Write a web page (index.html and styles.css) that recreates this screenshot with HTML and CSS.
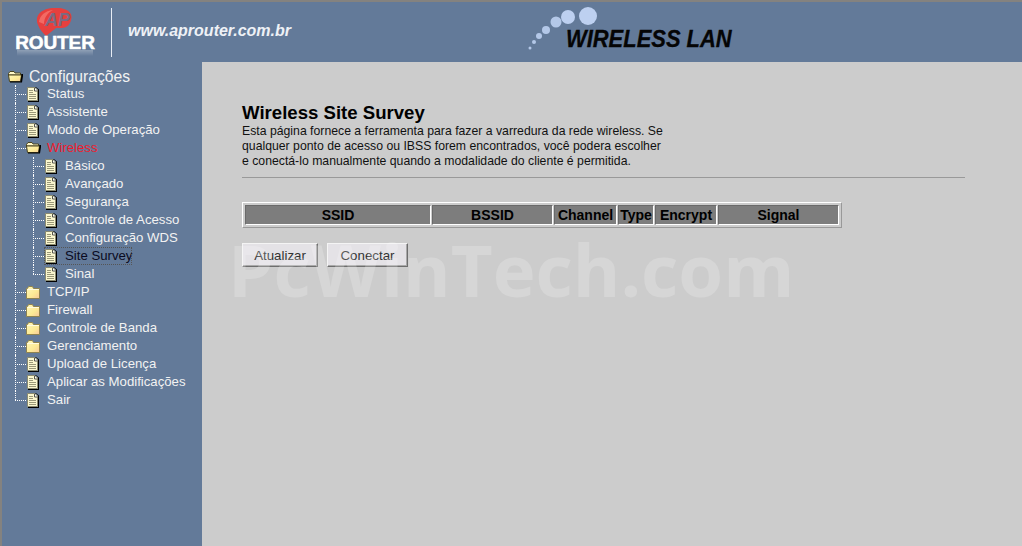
FILE: index.html
```html
<!DOCTYPE html>
<html lang="pt-BR">
<head>
<meta charset="UTF-8">
<title>Wireless Site Survey</title>
<link rel="stylesheet" href="styles.css">
</head>
<body>
<svg class="defs" width="0" height="0">
  <defs>
    <linearGradient id="amarelo" x1="0" y1="0" x2="1" y2="1">
      <stop offset="0" stop-color="#fff8bc"/>
      <stop offset=".6" stop-color="#fdea94"/>
      <stop offset="1" stop-color="#f6c79a"/>
    </linearGradient>
  </defs>
  <symbol id="doc" viewBox="0 0 12 15">
    <path d="M.5.5H8L10.500 3V13.500H.5Z" fill="#fbf7cf" stroke="#8a8a70"/>
    <path d="M8 .5H9L11 2.500V14H1V15H12V2.500L9 0H8Z" fill="#000"/>
    <path d="M2 3.500H6M2 5.500H6M2 7.500H9M2 9.500H9M2 11.500H9" stroke="#9a9878" fill="none"/>
    <path d="M7.500 1V4H10.500" fill="#fff" stroke="#55554a"/>
  </symbol>
  <symbol id="folder" viewBox="0 0 14 13">
    <path d="M.5 2.500H1.500L2.500.5H6.500L7.500 2.500H13.500V12.500H.5Z" fill="url(#amarelo)" stroke="#8f8350"/>
    <path d="M1 3.500H13" stroke="#fffbe0" fill="none"/>
  </symbol>
  <symbol id="folder-open" viewBox="0 0 15 12">
    <path d="M.5 2.500L2 .5H6L7 2H12.500V4H.5Z" fill="#fff8c8" stroke="#4a4420"/>
    <path d="M.5 4H13.500L12.500 10.500H1.500Z" fill="url(#amarelo)" stroke="#4a4420"/>
    <path d="M13 3H15V5L14 11.500H2V10.500H12.500L13.500 4Z" fill="#000"/>
  </symbol>
</svg>

<div class="page">
  <header class="topo">
    <div class="logo">
      <svg class="logo-ap" viewBox="0 0 36 28" width="36" height="28">
        <path d="M2 17C-2 8 5 1 16 0C28-1 38 3 35 12C34 17 30 20 26 20L20 20L10 28C7 25 4 22 2 17Z" fill="#e6403e"/>
        <path d="M3 14C4 7 9 3 17 2C11 5 8 10 8 16Z" fill="#f26a64"/>
        <text x="9" y="18" class="logo-ap-txt">AP</text>
      </svg>
      <span class="logo-router">ROUTER</span>
      <div class="logo-refl"></div>
    </div>
    <div class="sep"></div>
    <div class="site">www.aprouter.com.br</div>
    <div class="wlan">
      <svg class="dots" viewBox="0 0 72 46" width="72" height="46">
        <circle cx="60" cy="11" r="9" fill="#bdd0f0"/>
        <circle cx="40" cy="12" r="7" fill="#bdd0f0"/>
        <circle cx="28" cy="17" r="5.500" fill="#b4c8e8"/>
        <circle cx="18" cy="25" r="4" fill="#b4c8e8"/>
        <circle cx="11" cy="31" r="3" fill="#b4c8e8"/>
        <circle cx="6" cy="37" r="2" fill="#b4c8e8"/>
        <circle cx="2" cy="43" r="1.500" fill="#b4c8e8"/>
      </svg>
      <span class="wlan-txt">WIRELESS LAN</span>
    </div>
  </header>

  <div class="corpo">
    <nav class="menu">
      <div class="raiz"><svg class="ico-a"><use href="#folder-open"/></svg>Configurações</div>
      <ul class="tree">
        <li><a class="item"><svg class="ico"><use href="#doc"/></svg>Status</a></li>
        <li><a class="item"><svg class="ico"><use href="#doc"/></svg>Assistente</a></li>
        <li><a class="item"><svg class="ico"><use href="#doc"/></svg>Modo de Operação</a></li>
        <li>
          <a class="item aberto"><svg class="ico-a"><use href="#folder-open"/></svg>Wireless</a>
          <ul class="tree sub">
            <li><a class="item"><svg class="ico"><use href="#doc"/></svg>Básico</a></li>
            <li><a class="item"><svg class="ico"><use href="#doc"/></svg>Avançado</a></li>
            <li><a class="item"><svg class="ico"><use href="#doc"/></svg>Segurança</a></li>
            <li><a class="item"><svg class="ico"><use href="#doc"/></svg>Controle de Acesso</a></li>
            <li><a class="item"><svg class="ico"><use href="#doc"/></svg>Configuração WDS</a></li>
            <li><a class="item atual"><svg class="ico"><use href="#doc"/></svg>Site Survey</a></li>
            <li><a class="item"><svg class="ico"><use href="#doc"/></svg>Sinal</a></li>
          </ul>
        </li>
        <li><a class="item"><svg class="ico-f"><use href="#folder"/></svg>TCP/IP</a></li>
        <li><a class="item"><svg class="ico-f"><use href="#folder"/></svg>Firewall</a></li>
        <li><a class="item"><svg class="ico-f"><use href="#folder"/></svg>Controle de Banda</a></li>
        <li><a class="item"><svg class="ico-f"><use href="#folder"/></svg>Gerenciamento</a></li>
        <li><a class="item"><svg class="ico"><use href="#doc"/></svg>Upload de Licença</a></li>
        <li><a class="item"><svg class="ico"><use href="#doc"/></svg>Aplicar as Modificações</a></li>
        <li><a class="item"><svg class="ico"><use href="#doc"/></svg>Sair</a></li>
      </ul>
    </nav>

    <main class="conteudo">
      <h1>Wireless Site Survey</h1>
      <p class="desc">Esta página fornece a ferramenta para fazer a varredura da rede wireless. Se<br>
      qualquer ponto de acesso ou IBSS forem encontrados, você podera escolher<br>
      e conectá-lo manualmente quando a modalidade do cliente é permitida.</p>
      <hr class="linha">
      <table class="tabela">
        <tr>
          <th class="c-ssid">SSID</th>
          <th class="c-bssid">BSSID</th>
          <th class="c-chan">Channel</th>
          <th class="c-type">Type</th>
          <th class="c-enc">Encrypt</th>
          <th class="c-sig">Signal</th>
        </tr>
      </table>
      <div class="botoes">
        <button class="btn b1">Atualizar</button>
        <button class="btn b2">Conectar</button>
      </div>
      <div class="marca">PcWinTech.com</div>
    </main>
  </div>
</div>
</body>
</html>
```

FILE: styles.css
```css
html,body{margin:0;padding:0;height:100%;overflow:hidden;}
body{font-family:"Liberation Sans",Arial,sans-serif;background:#637a99;}
.defs{position:absolute;}
.page{height:100%;box-sizing:border-box;border-top:2px solid #84827f;border-left:2px solid #84827f;display:flex;flex-direction:column;}

/* topo */
.topo{height:60px;flex:none;display:flex;align-items:flex-start;background:#637a99;}
.logo{width:76px;margin-left:15px;display:flex;flex-direction:column;align-items:center;}
.logo-ap{margin-top:6px;margin-left:-2px;}
.logo-ap-txt{font:italic bold 18px "Liberation Sans",sans-serif;fill:#7b6a82;}
.logo-router{font-size:19px;font-weight:bold;line-height:15px;color:#fff;margin-top:-1px;-webkit-text-stroke:.5px #fff;letter-spacing:-.1px;}
.logo-refl{width:76px;height:6px;background:linear-gradient(rgba(255,255,255,.28),rgba(255,255,255,0));}
.sep{width:1px;height:49px;margin:6px 0 0 18px;background:#e8edf5;}
.site{margin:17px 0 0 16px;width:162px;font-size:16px;font-style:italic;font-weight:bold;line-height:24px;color:#eef1f6;white-space:nowrap;}
.wlan{margin:3px 0 0 238px;display:flex;position:relative;}
.wlan-txt{position:absolute;left:38px;top:20px;font-size:24.500px;font-style:italic;font-weight:bold;line-height:28px;color:#050505;white-space:nowrap;transform:scaleX(.895);transform-origin:0 50%;-webkit-text-stroke:.3px #050505;}

.corpo{flex:1;display:flex;min-height:0;}

/* menu */
.menu{width:200px;flex:none;padding-top:7px;color:#f2f2f2;font-size:13.200px;}
.raiz{height:16px;line-height:16px;font-size:15.700px;display:flex;align-items:center;margin-left:6px;}
.raiz .ico-a{margin-right:6px;}
.tree{list-style:none;margin:0;padding:0;}
.tree li{position:relative;}
.tree li::before{content:"";position:absolute;left:13px;top:0;bottom:0;border-left:1px dotted #fff;}
.tree li:last-child::before{bottom:auto;height:9px;}
.tree li::after{content:"";position:absolute;left:13px;top:9px;width:11px;border-top:1px dotted #fff;}
.sub{padding-left:18px;}
.item{height:18px;line-height:18px;display:flex;align-items:center;padding-left:24px;white-space:nowrap;}
.ico{width:12px;height:15px;margin:0 8px 0 1px;flex:none;}
.ico-f{width:14px;height:13px;margin-right:7px;flex:none;}
.ico-a{width:15px;height:12px;margin-right:6px;flex:none;}
.aberto{color:#f01a2c;}
.atual{color:#0a0a22;outline:1px dotted #555;outline-offset:-1px;margin-left:24px;padding-left:0;width:88px;}

/* conteudo */
.conteudo{flex:1;background:#ccc;position:relative;padding:40px 57px 0 40px;color:#000;}
h1{margin:0 0 1px;font-size:18.600px;line-height:21px;font-weight:bold;}
.desc{margin:0;font-size:12.250px;line-height:15px;color:#111;white-space:nowrap;}
.linha{height:1px;border:0;background:#999;margin:8px 0 0;}
.tabela{margin-top:24px;border-collapse:separate;border-spacing:1px 2px;padding:0 1px;border:1px solid;border-color:#fff #999 #999 #fff;table-layout:fixed;width:600px;}
.tabela th{padding:0;height:18px;background:#7d7d7d;border:1px solid;border-color:#6a6a6a #fff #fff #6a6a6a;font-size:14px;line-height:18px;font-weight:bold;color:#000;}
.c-ssid{width:184px;}
.c-bssid{width:119px;}
.c-chan{width:61px;}
.c-type{width:34px;}
.c-enc{width:60px;}
.botoes{margin-top:15px;display:flex;gap:9px;}
.btn{height:24px;padding:0;background:#e4e2e6;border:1px solid;border-color:#f4f4f4 #6e6e6e #6e6e6e #f4f4f4;box-shadow:inset -1px -1px 0 #a9a9a9;font:13.300px "Liberation Sans",Arial,sans-serif;color:#333;}
.b1{width:76px;}
.b2{width:81px;}
.marca{position:absolute;left:26px;top:178px;font:bold 72.500px/58px "Open Sans",sans-serif;color:rgba(255,255,255,.2);white-space:nowrap;pointer-events:none;}
```
